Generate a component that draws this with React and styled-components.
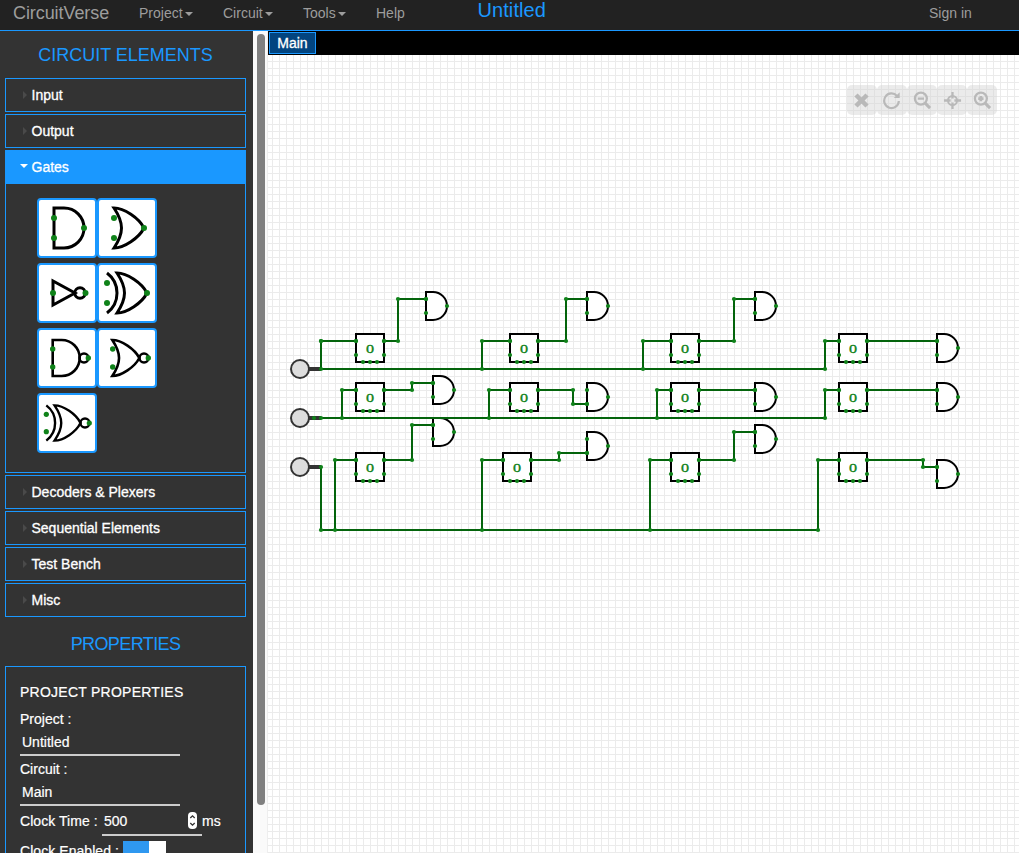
import React from "react";
import styled, { createGlobalStyle } from "styled-components";

const BLUE = "#1a98ff";
const PIN = "#0f8219";
const WIRE = "#04640c";

const GlobalStyle = createGlobalStyle`
  * { box-sizing: border-box; }
  body {
    margin: 0;
    overflow: hidden;
    font-family: "Liberation Sans", Arial, sans-serif;
    font-size: 14px;
    color: #fff;
  }
`;

const Page = styled.div`
  display: flex;
  flex-direction: column;
  width: 1019px;
  height: 853px;
  overflow: hidden;
  background: #fff;
`;

const Header = styled.header`
  display: flex;
  flex: none;
  height: 31px;
  padding-left: 13px;
  background: #222;
  border-bottom: 1px solid ${BLUE};
  color: #9d9d9d;
  line-height: 26px;
  white-space: nowrap;
`;

const Brand = styled.div`
  width: 126px;
  font-size: 18px;
  letter-spacing: -0.08px;
`;

const NavItem = styled.div`
  width: ${(p) => p.$width}px;
`;

const Caret = styled.span`
  display: inline-block;
  margin-left: 2px;
  vertical-align: middle;
  border: 4px solid transparent;
  border-top-color: currentColor;
  border-bottom: 0;
`;

const ProjectTitle = styled.div`
  flex: 1;
  color: ${BLUE};
  font-size: 20px;
  line-height: 21px;
  letter-spacing: 0.08px;
`;

const SignIn = styled.div`
  width: 90px;
`;

const Body = styled.div`
  display: flex;
  flex: 1;
  min-height: 0;
`;

const Sidebar = styled.aside`
  flex: none;
  width: 253px;
  padding: 0 7px 0 5px;
  background: #333;
  overflow: hidden;
`;

const PanelTitle = styled.h2`
  margin: 0;
  height: ${(p) => p.$height}px;
  padding-top: ${(p) => p.$top}px;
  color: ${BLUE};
  font-size: 18px;
  font-weight: 400;
  line-height: 20px;
  letter-spacing: ${(p) => p.$tracking || 0}px;
  text-align: center;
  text-transform: uppercase;
`;

const Accordion = styled.div`
  display: flex;
  flex-direction: column;
  gap: 2px;
`;

const SectionHead = styled.div`
  display: flex;
  align-items: center;
  height: 34px;
  padding-left: ${(p) => (p.$open ? 13.5 : 17)}px;
  gap: ${(p) => (p.$open ? 4 : 4.5)}px;
  border: 1px solid ${BLUE};
  background: ${(p) => (p.$open ? BLUE : "#333")};
  -webkit-text-stroke: 0.3px #fff;

  &::before {
    content: "";
    border: 4px solid transparent;
    ${(p) =>
      p.$open
        ? "border-top-color: #fff; border-bottom: 0; margin-bottom: 2px;"
        : "border-left-color: #4a4a4a; border-right: 0; margin-bottom: 1px;"}
  }
`;

const SectionBody = styled.div`
  height: 289px;
  padding: 14px 31px;
  border: 1px solid ${BLUE};
  border-top: 0;
`;

const GateGrid = styled.div`
  display: grid;
  grid-template-columns: 60px 60px;
  grid-auto-rows: 60px;
  row-gap: 5px;
`;

const GateTile = styled.div`
  border: 2px solid ${BLUE};
  border-radius: 4px;
  background: #fff;
  overflow: hidden;

  svg { display: block; }
`;

const Properties = styled.div`
  height: 260px;
  padding: 16px 14px;
  border: 1px solid ${BLUE};
  -webkit-text-stroke: 0.2px #fff;
`;

const PropertiesHead = styled.div`
  height: 27px;
  line-height: 18px;
  letter-spacing: 0.25px;
`;

const Label = styled.div`
  height: 17px;
  line-height: ${(p) => p.$line}px;
`;

const Field = styled.div`
  width: ${(p) => p.$width}px;
  height: ${(p) => p.$height}px;
  padding-left: 2px;
  border-bottom: 2px solid #ccc;
  line-height: ${(p) => p.$line}px;
  margin-bottom: 5px;
`;

const Row = styled.div`
  display: flex;
  height: 30px;
  line-height: 20px;
`;

const RowLabel = styled.div`
  width: ${(p) => p.$width}px;
  letter-spacing: 0.06px;
`;

const NumberField = styled.div`
  display: flex;
  justify-content: space-between;
  width: 100px;
  height: 25px;
  padding: 0 5px 0 2px;
  border-bottom: 2px solid #ccc;
`;

const Spinner = styled.svg`
  display: block;
  margin-top: 1px;
`;

const Toggle = styled.div`
  width: 43px;
  height: 20px;
  border-right: 17px solid #fff;
  background: #2f98f0;
`;

const ScrollTrack = styled.div`
  flex: none;
  width: 15px;
  padding: 3px 3px 0 4px;
  background: #fafafa;
  border-right: 1px solid #eee;
`;

const ScrollThumb = styled.div`
  width: 8px;
  height: 771px;
  border-radius: 4px;
  background: #808080;
`;

const Workspace = styled.main`
  position: relative;
  display: flex;
  flex: 1;
  flex-direction: column;
`;

const TabBar = styled.div`
  height: 24px;
  padding: 1px;
  background: #000;
`;

const Tab = styled.div`
  width: 47px;
  height: 22px;
  border: 1px solid ${BLUE};
  background: #02447f;
  line-height: 20px;
  text-align: center;
  -webkit-text-stroke: 0.3px #fff;
`;

const Canvas = styled.svg`
  display: block;
  width: 751px;
  height: 798px;
`;

const Tools = styled.div`
  position: absolute;
  top: 54px;
  right: 22px;
  display: flex;
  gap: 0.5px;
`;

const Tool = styled.div`
  display: grid;
  place-items: center;
  width: 29.6px;
  height: 30px;
  border-radius: 5px;
  background: rgba(210, 210, 210, 0.45);
`;

const and = (cx, cy, r, left) =>
  `M${left} ${cy - r}H${cx}A${r} ${r} 0 0 1 ${cx} ${cy + r}H${left}Z`;

const GATES = [
  { body: and(25, 28, 20, 15), pins: [[15, 18], [15, 38], [45, 28]], r: 3 },
  {
    body: "M15 8C25 8 40 18 45 28C40 38 25 48 15 48C25 33 25 23 15 8Z",
    pins: [[15, 18], [15, 38], [45, 28]],
    r: 3,
  },
  { body: "M14 16V40L36 28Z", bubble: [41, 28, 5.2], pins: [[14, 28], [46.5, 28]], r: 3 },
  {
    body: "M18 8C28 8 43 18 48 28C43 38 28 48 18 48C28 33 28 23 18 8ZM8 8A25 25 0 0 1 8 48",
    pins: [[8, 18], [8, 38], [48, 28]],
    r: 3,
  },
  {
    body: and(22.7, 28, 18, 13.7),
    bubble: [45, 28, 4.5],
    pins: [[13.7, 19], [13.7, 37], [49.3, 28]],
    r: 2.7,
    w: 2.6,
  },
  {
    body: "M13.3 10C22.3 10 35.8 19 40.3 28C35.8 37 22.3 46 13.3 46C22.3 32.5 22.3 23.5 13.3 10Z",
    bubble: [45, 28, 4.5],
    pins: [[13.7, 19], [13.7, 37], [49.3, 28]],
    r: 2.7,
    w: 2.6,
  },
  {
    body: "M15.5 10.4C24.5 10.4 37 19 41.5 28C37 37 24.5 45.6 15.5 45.6C24.5 32.5 24.5 23.5 15.5 10.4ZM7.3 10.4A22 22 0 0 1 7.3 45.6",
    bubble: [46, 28, 4.5],
    pins: [[7.3, 19.3], [7.3, 36.7], [50.3, 28]],
    r: 2.6,
    w: 2.4,
  },
];

function GateIcon({ body, bubble, pins, r, w = 3 }) {
  return (
    <svg width="56" height="56">
      <path d={body} fill="none" stroke="#000" strokeWidth={w} />
      {bubble && (
        <circle cx={bubble[0]} cy={bubble[1]} r={bubble[2]} fill="none" stroke="#000" strokeWidth={w} />
      )}
      {pins.map(([x, y]) => (
        <circle key={`${x}-${y}`} cx={x} cy={y} r={r} fill={PIN} />
      ))}
    </svg>
  );
}

const INPUTS = [369, 418, 467];

const BLOCKS = [
  [370, 348], [524, 348], [685, 348], [853, 348],
  [370, 397], [524, 397], [685, 397], [853, 397],
  [370, 467], [517, 467], [685, 467], [853, 467],
];

const AND_GATES = [
  [433, 306], [594, 306], [762, 306], [944, 348],
  [440, 390], [594, 397], [762, 397], [944, 397],
  [440, 432], [594, 446], [762, 439], [944, 474],
];

const WIRES = [
  [[321, 341], [321, 369], [825, 369], [825, 341], [839, 341]],
  [[321, 341], [356, 341]],
  [[482, 369], [482, 341], [510, 341]],
  [[643, 369], [643, 341], [671, 341]],
  [[384, 341], [398, 341], [398, 299], [426, 299]],
  [[538, 341], [566, 341], [566, 299], [587, 299]],
  [[699, 341], [734, 341], [734, 299], [755, 299]],
  [[867, 341], [937, 341]],
  [[321, 418], [825, 418], [825, 390], [839, 390]],
  [[342, 418], [342, 390], [356, 390]],
  [[489, 418], [489, 390], [510, 390]],
  [[657, 418], [657, 390], [671, 390]],
  [[384, 390], [412, 390], [412, 383], [433, 383]],
  [[538, 390], [573, 390], [573, 404], [587, 404]],
  [[699, 390], [755, 390]],
  [[867, 390], [937, 390]],
  [[321, 467], [321, 530], [818, 530], [818, 460], [839, 460]],
  [[335, 530], [335, 460], [356, 460]],
  [[482, 530], [482, 460], [503, 460]],
  [[650, 530], [650, 460], [671, 460]],
  [[384, 460], [412, 460], [412, 425], [433, 425]],
  [[531, 460], [559, 460], [559, 453], [587, 453]],
  [[699, 460], [734, 460], [734, 432], [755, 432]],
  [[867, 460], [923, 460], [923, 467], [937, 467]],
];

const Pins = ({ at }) =>
  at.map(([x, y], i) => <circle key={i} cx={x} cy={y} r="2.1" fill={PIN} />);

function Circuit() {
  return (
    <Canvas viewBox="268 55 751 798">
      <defs>
        <pattern id="grid" x="6" y="5" width="7" height="7" patternUnits="userSpaceOnUse">
          <path d="M0 0H7V1H1V7H0Z" fill="#ebebeb" />
        </pattern>
      </defs>
      <rect x="268" y="55" width="751" height="798" fill="#fff" />
      <rect x="268" y="55" width="751" height="798" fill="url(#grid)" />
      {INPUTS.map((y) => (
        <g key={y}>
          <path d={`M309 ${y}H321`} stroke="#333" strokeWidth="4" />
          <circle cx="300" cy={y} r="9" fill="#ddd" stroke="#333" strokeWidth="2" />
        </g>
      ))}
      {BLOCKS.map(([x, y]) => (
        <rect key={`${x}-${y}`} x={x - 14} y={y - 14} width="28" height="28" fill="#fff" stroke="#000" strokeWidth="2" />
      ))}
      {AND_GATES.map(([x, y]) => (
        <path key={`${x}-${y}`} d={and(x, y, 14, x - 7)} fill="#fff" stroke="#000" strokeWidth="2" />
      ))}
      {WIRES.map((pts, i) => (
        <polyline key={i} points={pts.join(" ")} fill="none" stroke={WIRE} strokeWidth="2" />
      ))}
      {WIRES.map((pts, i) => (
        <Pins key={i} at={pts} />
      ))}
      <Pins at={[[314, 418]]} />
      {BLOCKS.map(([x, y]) => (
        <g key={`${x}-${y}`}>
          <Pins
            at={[
              [x - 14, y - 7], [x - 14, y + 7], [x + 14, y - 7], [x + 14, y + 7],
              [x - 7, y + 14], [x, y + 14], [x + 7, y + 14],
            ]}
          />
          <text
            transform={`translate(${x} ${y + 5}) scale(1.35 1)`}
            textAnchor="middle"
            fontFamily="Liberation Serif, serif"
            fontSize="12"
            fill={PIN}
            stroke={PIN}
            strokeWidth="0.3"
          >
            0
          </text>
        </g>
      ))}
      {AND_GATES.map(([x, y]) => (
        <Pins key={`${x}-${y}`} at={[[x - 7, y - 7], [x - 7, y + 7], [x + 14, y]]} />
      ))}
    </Canvas>
  );
}

const TOOL_ICONS = [
  <path key="x" d="M4.2 4.2L15.8 15.8M15.8 4.2L4.2 15.8" strokeWidth="4.8" />,
  <g key="r">
    <path d="M15.8 5.2A7.7 7.7 0 1 0 17.7 10.5" strokeWidth="2.3" />
    <path d="M18.6 1.2V7.4H12.4Z" fill="#b9b9b9" stroke="none" />
  </g>,
  <g key="o">
    <circle cx="8.3" cy="8" r="6.3" strokeWidth="2.4" />
    <path d="M12.5 12.5L18 18" strokeWidth="3.2" />
    <path d="M5 8H11.6" strokeWidth="2.4" />
  </g>,
  <g key="c">
    <circle cx="10" cy="10" r="4.8" strokeWidth="2" />
    <path d="M10 1V8M10 12V19M1 10H8M12 10H19" strokeWidth="2.4" />
  </g>,
  <g key="i">
    <circle cx="8.3" cy="8" r="6.3" strokeWidth="2.4" />
    <path d="M12.5 12.5L18 18" strokeWidth="3.2" />
    <path d="M5.5 8H11.1M8.3 5.2V10.8" strokeWidth="2.8" />
  </g>,
];

const Section = ({ children, open }) => <SectionHead $open={open}>{children}</SectionHead>;

export default function App() {
  return (
    <Page>
      <GlobalStyle />
      <Header>
        <Brand>CircuitVerse</Brand>
        <NavItem $width={84}>Project<Caret /></NavItem>
        <NavItem $width={80}>Circuit<Caret /></NavItem>
        <NavItem $width={73}>Tools<Caret /></NavItem>
        <NavItem $width={101.5}>Help</NavItem>
        <ProjectTitle>Untitled</ProjectTitle>
        <SignIn>Sign in</SignIn>
      </Header>
      <Body>
        <Sidebar>
          <PanelTitle $height={47} $top={14}>Circuit Elements</PanelTitle>
          <Accordion>
            <Section>Input</Section>
            <Section>Output</Section>
            <div>
              <Section open>Gates</Section>
              <SectionBody>
                <GateGrid>
                  {GATES.map((gate, i) => (
                    <GateTile key={i}><GateIcon {...gate} /></GateTile>
                  ))}
                </GateGrid>
              </SectionBody>
            </div>
            <Section>Decoders &amp; Plexers</Section>
            <Section>Sequential Elements</Section>
            <Section>Test Bench</Section>
            <Section>Misc</Section>
          </Accordion>
          <PanelTitle $height={49} $top={17} $tracking={-0.6}>Properties</PanelTitle>
          <Properties>
            <PropertiesHead>PROJECT PROPERTIES</PropertiesHead>
            <Label $line={18}>Project :</Label>
            <Field $width={160} $height={29} $line={30}>Untitled</Field>
            <Label $line={17}>Circuit :</Label>
            <Field $width={160} $height={28} $line={28}>Main</Field>
            <Row>
              <RowLabel $width={82}>Clock Time :</RowLabel>
              <NumberField>
                500
                <Spinner width="9" height="17">
                  <rect width="9" height="17" rx="4" fill="#fff" />
                  <path d="M2.3 6L4.5 3.8L6.7 6M2.3 11L4.5 13.2L6.7 11" fill="none" stroke="#333" strokeWidth="1.3" />
                </Spinner>
              </NumberField>
              ms
            </Row>
            <Row>
              <RowLabel $width={103}>Clock Enabled :</RowLabel>
              <Toggle />
            </Row>
          </Properties>
        </Sidebar>
        <ScrollTrack><ScrollThumb /></ScrollTrack>
        <Workspace>
          <TabBar><Tab>Main</Tab></TabBar>
          <Circuit />
          <Tools>
            {TOOL_ICONS.map((icon, i) => (
              <Tool key={i}>
                <svg width="19" height="19" viewBox="0 0 20 20" fill="none" stroke="#b9b9b9">{icon}</svg>
              </Tool>
            ))}
          </Tools>
        </Workspace>
      </Body>
    </Page>
  );
}
